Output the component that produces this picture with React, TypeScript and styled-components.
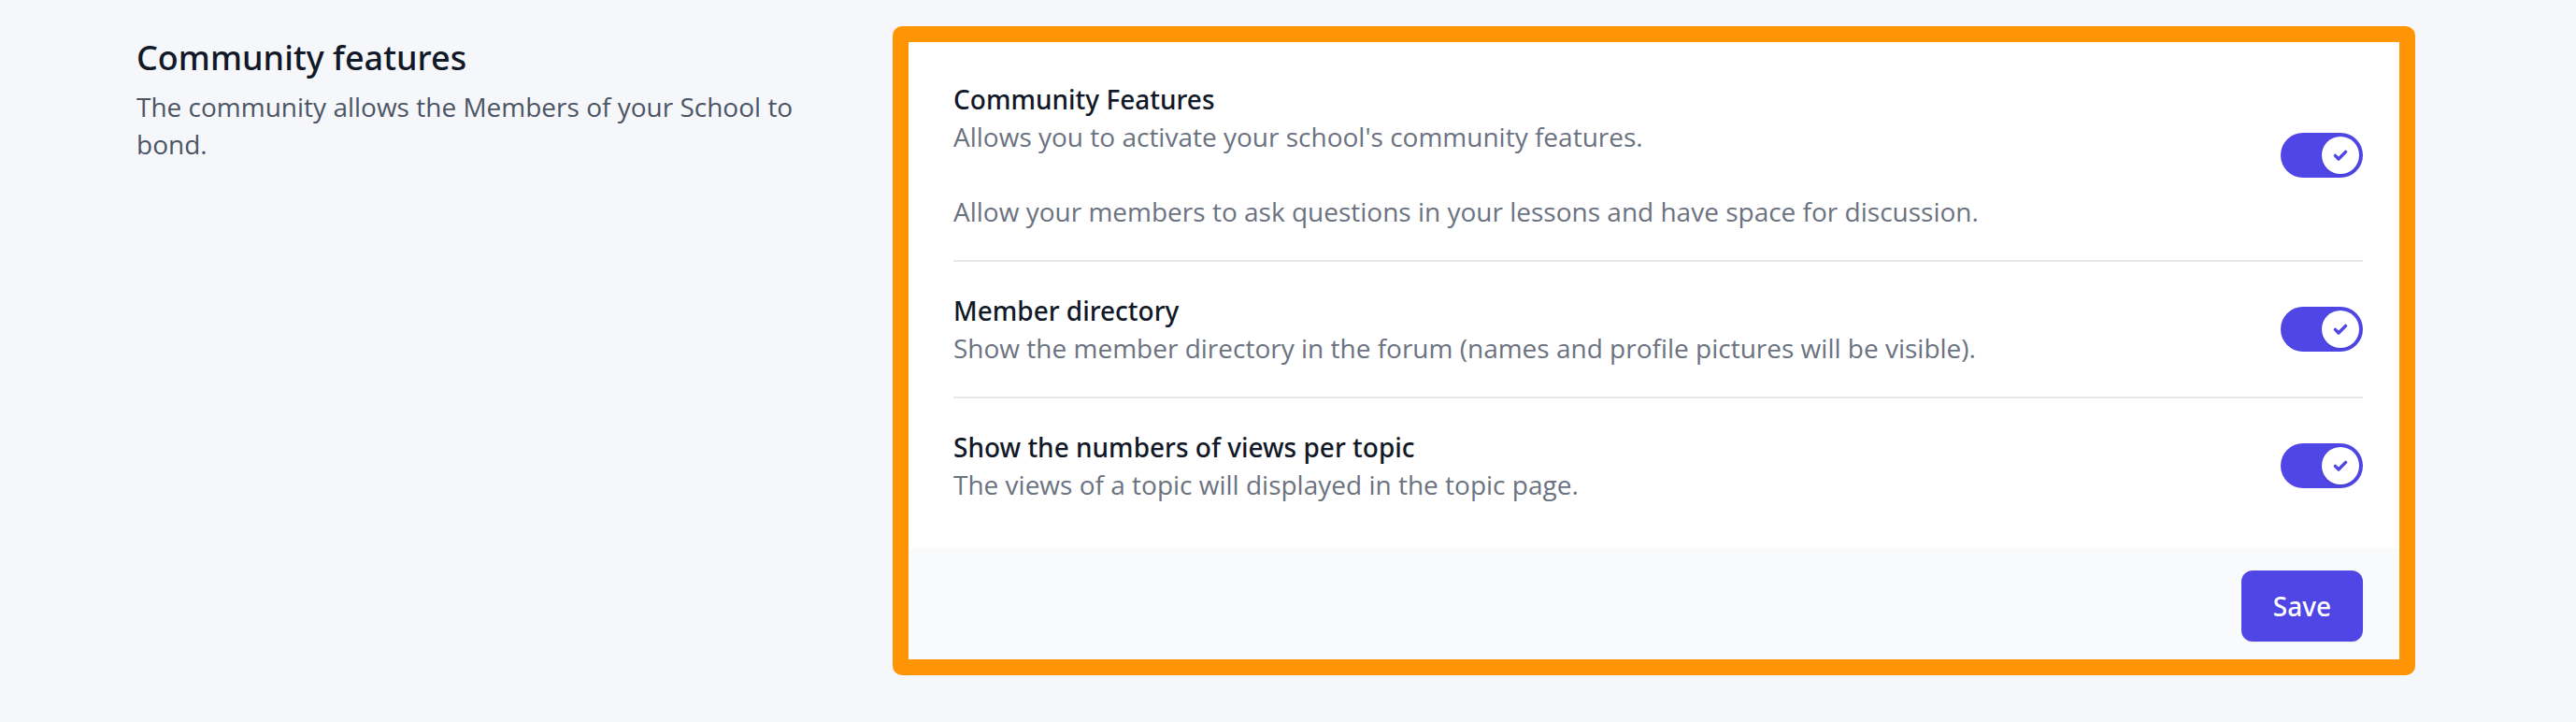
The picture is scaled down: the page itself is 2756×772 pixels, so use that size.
import React from 'react';
import styled, { createGlobalStyle } from 'styled-components';

const GlobalStyle = createGlobalStyle`
  html, body {
    margin: 0;
    padding: 0;
    background: #f6f7fb;
    font-family: "Open Sans", "Noto Sans", "Liberation Sans", sans-serif;
    -webkit-font-smoothing: antialiased;
  }
  * {
    box-sizing: border-box;
  }
`;

const mediumFont = `"Noto Sans", "Open Sans", "Liberation Sans", sans-serif`;

const Page = styled.div`
  padding: 38px 0 0 146px;
  min-height: 772px;
`;

const Layout = styled.div`
  display: grid;
  grid-template-columns: 778px 1604px;
  column-gap: 48px;
  align-items: start;
`;

const Intro = styled.div`
  padding-right: 32px;
`;

const IntroTitle = styled.h3`
  margin: 0;
  font-family: ${mediumFont};
  font-size: 36px;
  line-height: 48px;
  font-weight: 500;
  color: #111827;
`;

const IntroText = styled.p`
  margin: 8px 0 0;
  font-size: 28px;
  line-height: 40px;
  color: #4b5563;
`;

const CardWrap = styled.div`
  position: relative;
`;

const Highlight = styled.div`
  position: absolute;
  top: -10px;
  left: -17px;
  right: -8px;
  bottom: -12px;
  border: 17px solid #ff9505;
  border-radius: 10px;
  pointer-events: none;
  z-index: 2;
`;

const Card = styled.form`
  background: #ffffff;
  overflow: hidden;
`;

const CardBody = styled.div`
  padding: 16px 48px;
`;

const SettingRow = styled.div<{ $first?: boolean }>`
  display: flex;
  align-items: center;
  justify-content: space-between;
  gap: 32px;
  padding: 32px 0;
  border-top: ${(p) => (p.$first ? 'none' : '2px solid #e5e7eb')};
`;

const SettingText = styled.div`
  display: flex;
  flex-direction: column;
`;

const SettingTitle = styled.span`
  font-family: ${mediumFont};
  font-size: 28px;
  line-height: 40px;
  font-weight: 500;
  color: #111827;
`;

const SettingDesc = styled.p`
  margin: 0;
  font-size: 28px;
  line-height: 40px;
  color: #6b7280;

  & + & {
    margin-top: 40px;
  }
`;

const Switch = styled.button<{ $on: boolean }>`
  position: relative;
  flex-shrink: 0;
  width: 88px;
  height: 48px;
  padding: 0;
  border: 4px solid transparent;
  border-radius: 999px;
  background: ${(p) => (p.$on ? '#4f46e5' : '#e5e7eb')};
  cursor: pointer;
`;

const Knob = styled.span<{ $on: boolean }>`
  position: absolute;
  top: 0;
  left: 0;
  width: 40px;
  height: 40px;
  border-radius: 50%;
  background: #ffffff;
  display: flex;
  align-items: center;
  justify-content: center;
  transform: translateX(${(p) => (p.$on ? '40px' : '0')});
  box-shadow: 0 1px 3px rgba(0, 0, 0, 0.1);
`;

const Footer = styled.div`
  display: flex;
  justify-content: flex-end;
  padding: 24px 48px;
  background: #f9fafb;
`;

const SaveButton = styled.button`
  padding: 16px 32px;
  border: 2px solid transparent;
  border-radius: 12px;
  background: #4f46e5;
  color: #ffffff;
  font-family: ${mediumFont};
  font-size: 28px;
  line-height: 40px;
  font-weight: 500;
  box-shadow: 0 1px 2px rgba(0, 0, 0, 0.05);
  cursor: pointer;
`;

const CheckIcon = () => (
  <svg width="24" height="24" viewBox="0 0 12 12" fill="none">
    <path
      d="M3.2 6.2 L5 8 L8.8 4.2"
      stroke="#4f46e5"
      strokeWidth="1.7"
      strokeLinecap="round"
      strokeLinejoin="round"
    />
  </svg>
);

type Setting = {
  title: string;
  desc: string[];
};

const settings: Setting[] = [
  {
    title: 'Community Features',
    desc: [
      "Allows you to activate your school's community features.",
      'Allow your members to ask questions in your lessons and have space for discussion.',
    ],
  },
  {
    title: 'Member directory',
    desc: [
      'Show the member directory in the forum (names and profile pictures will be visible).',
    ],
  },
  {
    title: 'Show the numbers of views per topic',
    desc: ['The views of a topic will displayed in the topic page.'],
  },
];

const Toggle = ({ on }: { on: boolean }) => (
  <Switch type="button" role="switch" aria-checked={on} $on={on}>
    <Knob $on={on}>{on && <CheckIcon />}</Knob>
  </Switch>
);

export default function App() {
  return (
    <>
      <GlobalStyle />
      <Page>
        <Layout>
          <Intro>
            <IntroTitle>Community features</IntroTitle>
            <IntroText>The community allows the Members of your School to bond.</IntroText>
          </Intro>
          <CardWrap>
            <Card onSubmit={(e) => e.preventDefault()}>
              <CardBody>
                {settings.map((s, i) => (
                  <SettingRow key={s.title} $first={i === 0}>
                    <SettingText>
                      <SettingTitle>{s.title}</SettingTitle>
                      {s.desc.map((d) => (
                        <SettingDesc key={d}>{d}</SettingDesc>
                      ))}
                    </SettingText>
                    <Toggle on />
                  </SettingRow>
                ))}
              </CardBody>
              <Footer>
                <SaveButton type="submit">Save</SaveButton>
              </Footer>
            </Card>
            <Highlight />
          </CardWrap>
        </Layout>
      </Page>
    </>
  );
}
